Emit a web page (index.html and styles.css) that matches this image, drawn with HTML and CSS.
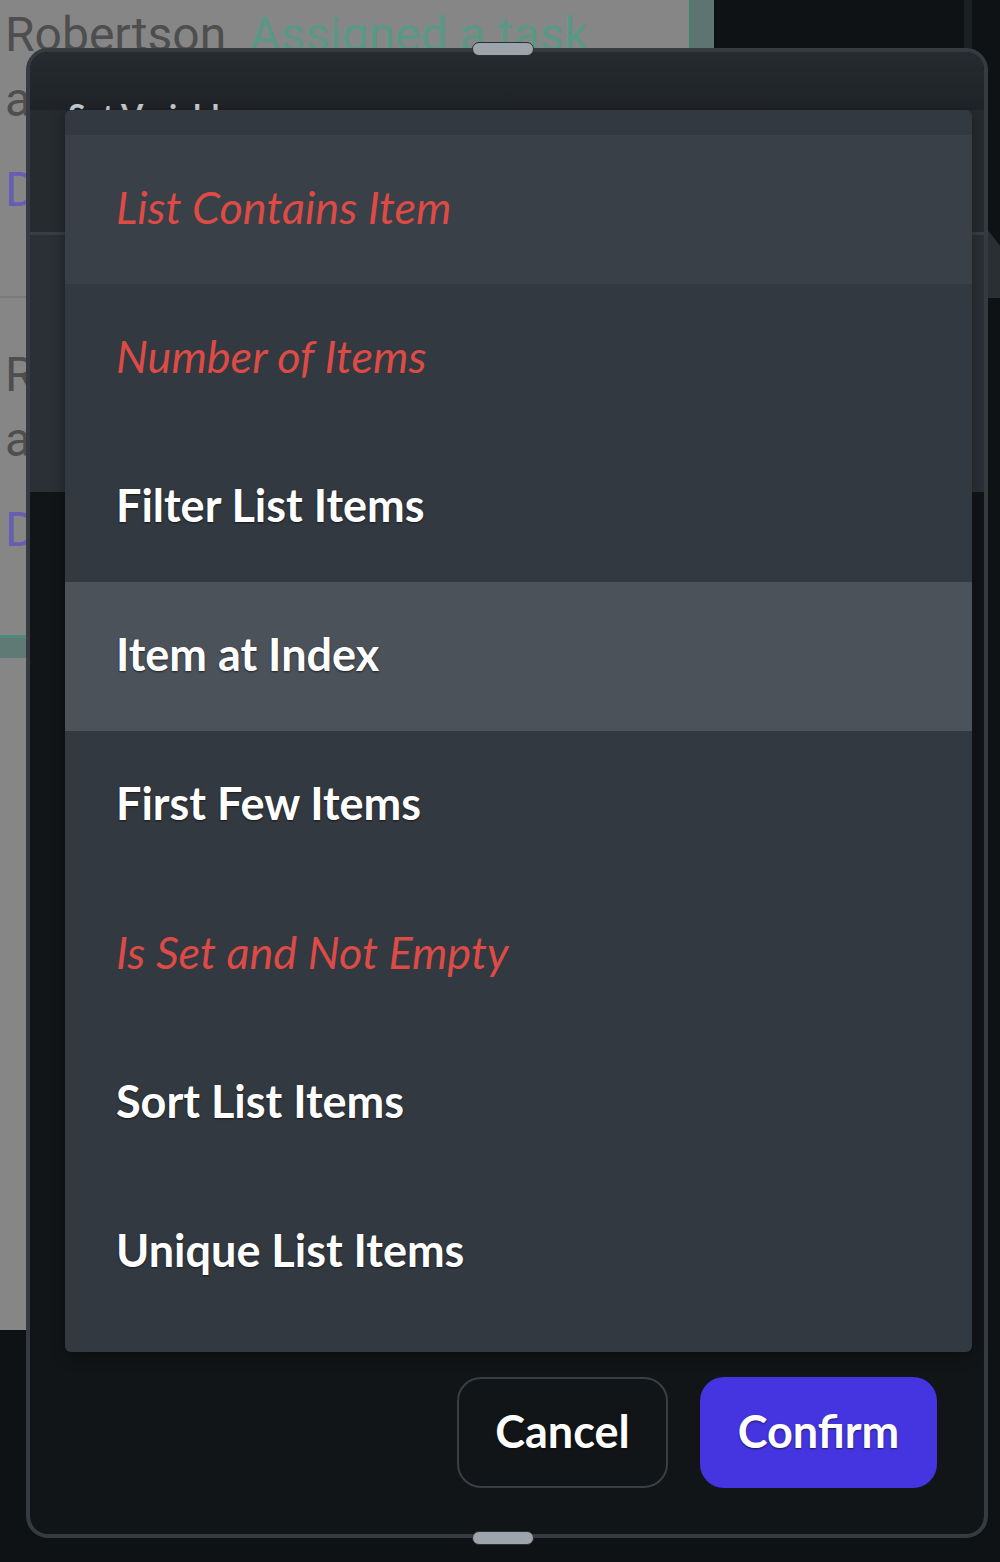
FILE: index.html
```html
<!DOCTYPE html>
<html lang="en">
<head>
<meta charset="utf-8">
<title>Set Variable</title>
<link rel="stylesheet" href="styles.css">
</head>
<body>
<div class="scene">
  <div class="feed">
    <div class="feed-item first">
      <div class="line l1"><span class="name">Robertson</span> <span class="action">Assigned a task</span></div>
      <div class="line l2">a</div>
      <div class="line l3">D</div>
    </div>
    <div class="feed-item active">
      <div class="line l1"><span class="name">R</span></div>
      <div class="line l2">a</div>
      <div class="line l3">D</div>
    </div>
    <div class="feed-band"></div>
  </div>
  <div class="feed-edge"></div>
  <div class="side">
    <div class="side-rule"></div>
    <div class="side-tab"></div>
  </div>
</div>

<div class="modal">
  <div class="modal-head"><h2 class="modal-title">Set Variable</h2></div>
  <div class="modal-sec sec-a"></div>
  <div class="modal-sec sec-b"></div>
  <div class="modal-fill"></div>
  <div class="modal-foot">
    <button class="btn btn-cancel">Cancel</button>
    <button class="btn btn-confirm">Confirm</button>
  </div>

  <ul class="menu">
    <li class="menu-item first-row disabled">List Contains Item</li>
    <li class="menu-item disabled">Number of Items</li>
    <li class="menu-item">Filter List Items</li>
    <li class="menu-item hover">Item at Index</li>
    <li class="menu-item">First Few Items</li>
    <li class="menu-item disabled">Is Set and Not Empty</li>
    <li class="menu-item">Sort List Items</li>
    <li class="menu-item">Unique List Items</li>
  </ul>

  <div class="handle handle-top"></div>
  <div class="handle handle-bottom"></div>
</div>
</body>
</html>
```

FILE: styles.css
```css
* { box-sizing: border-box; }

html, body {
  margin: 0;
  padding: 0;
}

body {
  width: 1000px;
  height: 1562px;
  overflow: hidden;
  background: #0f1214;
  font-family: "Lato", "Noto Sans", sans-serif;
  position: relative;
}

/* ---------- background scene ---------- */
.scene {
  display: flex;
  height: 1562px;
}

.feed {
  width: 690px;
  height: 1330px;
  background: #868686;
  overflow: hidden;
  font-family: "Roboto", "Liberation Sans", sans-serif;
}

.feed-item {
  height: 340px;
  padding-left: 5px;
  border-bottom: 2px solid #7a7a7a;
  color: #4e4e4e;
  font-size: 48px;
}

.feed-item.first {
  margin-top: -42px;
}

.feed-item.active {
  border-bottom: 3px solid #4e8a78;
}

.line {
  line-height: 60px;
  white-space: nowrap;
}

.l1 { padding-top: 47px; }
.l2 { margin-top: 5px; }
.l3 { margin-top: 30px; color: #675db2; }

.action { color: #5a9886; margin-left: 11px; }

.feed-band {
  height: 20px;
  background: #5f7a74;
}

.feed-edge {
  width: 25px;
  height: 1330px;
  background: #5d7471;
  border-left: 3px solid #4b7f70;
}

.side {
  flex: 1;
  position: relative;
}

.side-rule {
  width: 8px;
  height: 60px;
  margin-left: 250px;
  background: #1a1f22;
}

.side-tab {
  width: 14px;
  height: 70px;
  margin-left: 272px;
  margin-top: 168px;
  background: #2a2f34;
  clip-path: polygon(0 0, 100% 25%, 100% 100%, 0 100%);
}

/* ---------- modal ---------- */
.modal {
  position: absolute;
  left: 26px;
  top: 48px;
  width: 962px;
  height: 1490px;
  border: 4px solid #353b41;
  border-radius: 22px;
  background: #121517;
  display: flex;
  flex-direction: column;
}

.modal-head {
  height: 58px;
  border-radius: 18px 18px 0 0;
  background: linear-gradient(#262b30, #1f2327);
  padding-left: 38px;
  overflow: hidden;
}

.modal-title {
  margin: 0;
  padding-top: 44px;
  font-size: 32px;
  line-height: 40px;
  font-weight: 700;
  color: #c9cdd1;
}

.modal-sec.sec-a {
  height: 125px;
  background: #262b30;
  border-bottom: 3px solid #383e44;
}

.modal-sec.sec-b {
  height: 257px;
  background: #2b3036;
}

.modal-fill {
  flex: 1;
}

.modal-foot {
  display: flex;
  justify-content: flex-end;
  gap: 32px;
  padding: 0 47px 46px 0;
}

.btn {
  height: 111px;
  padding-bottom: 5px;
  border-radius: 24px;
  font-family: "Lato", "Noto Sans", sans-serif;
  font-size: 45px;
  font-weight: 700;
  color: #ffffff;
  text-shadow: 0 1px 2px rgba(0, 0, 0, 0.6);
  cursor: pointer;
}

.btn-cancel {
  width: 211px;
  background: #121517;
  border: 2px solid #3a3f44;
}

.btn-confirm {
  width: 237px;
  background: #4535e0;
  border: none;
}

/* ---------- dropdown menu ---------- */
.menu {
  position: absolute;
  left: 35px;
  top: 58px;
  width: 907px;
  margin: 0;
  padding: 25px 0;
  list-style: none;
  background: #333940;
  border-radius: 6px;
  box-shadow: 0 4px 14px rgba(0, 0, 0, 0.35);
}

.menu-item {
  height: 149px;
  display: flex;
  align-items: center;
  padding-left: 51px;
  padding-bottom: 6px;
  font-size: 45px;
  font-weight: 700;
  color: #ffffff;
  text-shadow: 0 1px 2px rgba(0, 0, 0, 0.6);
  white-space: nowrap;
}

.menu-item.disabled {
  color: #dc4b45;
  font-style: italic;
  font-weight: 400;
  text-shadow: none;
}

.menu-item.first-row {
  background: #3a4047;
}

.menu-item.hover {
  background: #4b525a;
}

/* ---------- resize handles ---------- */
.handle {
  position: absolute;
  left: 442px;
  width: 62px;
  height: 14px;
  border-radius: 7px;
  background: #9ea4ab;
  border: 1px solid #2a2f33;
}

.handle-top { top: -10px; }
.handle-bottom { bottom: -11px; }
```
